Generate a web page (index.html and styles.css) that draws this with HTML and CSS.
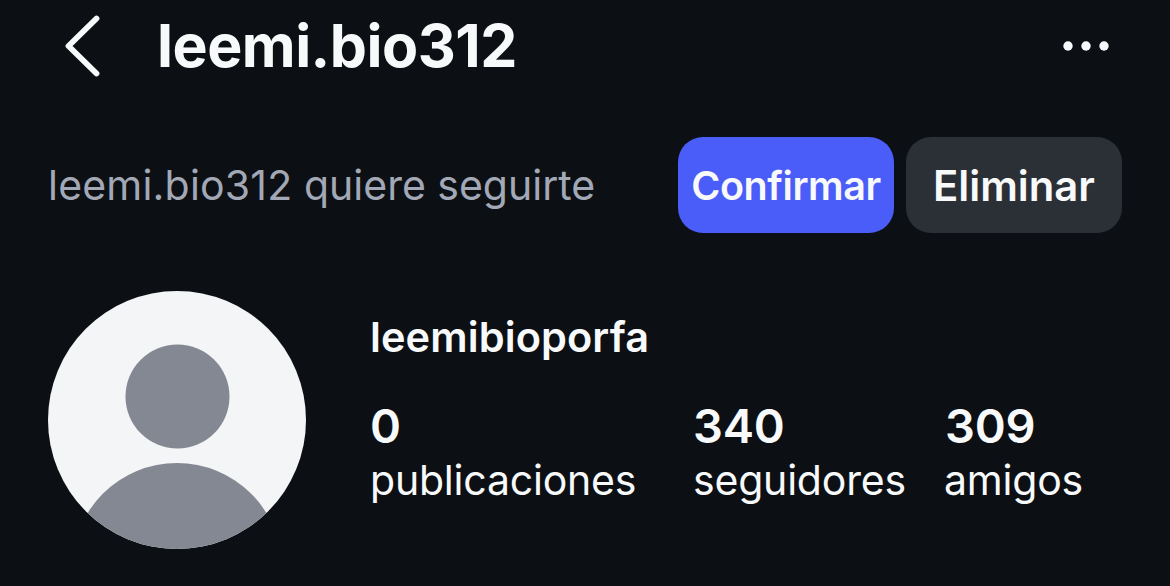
FILE: index.html
```html
<!DOCTYPE html>
<html lang="es">
<head>
  <meta charset="UTF-8" />
  <meta name="viewport" content="width=device-width, initial-scale=1.0" />
  <title>leemi.bio312</title>
  <link rel="stylesheet" href="styles.css">
</head>
<body>
  <header>
    <svg class="back" width="36" height="64" viewBox="0 0 36 64">
      <path d="M32.500 4.500 L4.500 32 L32.500 59.500" fill="none" stroke="#f8f9fa" stroke-width="5.800" stroke-linecap="round" stroke-linejoin="round" />
    </svg>
    <h1>leemi.bio312</h1>
    <svg class="more" width="48" height="12" viewBox="0 0 48 12">
      <circle cx="6" cy="6" r="4.700" />
      <circle cx="24" cy="6" r="4.700" />
      <circle cx="42" cy="6" r="4.700" />
    </svg>
  </header>

  <section class="request">
    <p><span class="user">leemi.bio312</span> quiere seguirte</p>
    <button class="confirm">Confirmar</button>
    <button class="delete">Eliminar</button>
  </section>

  <main>
    <svg class="avatar" width="258" height="258" viewBox="0 0 258 258">
      <defs>
        <clipPath id="round"><circle cx="129" cy="129" r="129" /></clipPath>
      </defs>
      <g clip-path="url(#round)">
        <rect width="258" height="258" fill="#f4f5f7" />
        <circle cx="129.500" cy="105.500" r="52" fill="#848893" />
        <circle cx="129" cy="277" r="105" fill="#848893" />
      </g>
    </svg>
    <div class="info">
      <h2>leemibioporfa</h2>
      <div class="stats">
        <div class="stat posts"><strong>0</strong><span>publicaciones</span></div>
        <div class="stat followers"><strong>340</strong><span>seguidores</span></div>
        <div class="stat friends"><strong>309</strong><span>amigos</span></div>
      </div>
    </div>
  </main>
</body>
</html>
```
FILE: styles.css
```css
* {
  box-sizing: border-box;
}

body {
  margin: 0;
  height: 586px;
  overflow: hidden;
  font-family: Inter, sans-serif;
  background-color: #0c1014;
  color: #f8f9fa;
}

h1, h2, p {
  margin: 0;
  white-space: nowrap;
}

header {
  display: flex;
  align-items: center;
  height: 92px;
  padding: 0 60px 0 64px;
}

h1 {
  margin-left: 57px;
  padding-bottom: 2px;
  font-size: 59px;
  font-weight: 700;
  letter-spacing: -0.5px;
}

.more {
  margin-left: auto;
  fill: #f8f9fa;
}

.request {
  display: flex;
  align-items: center;
  gap: 12px;
  height: 96px;
  margin: 45px 48px 0 48px;
}

.request p {
  flex: 1;
  font-size: 41px;
  color: #a2a8b5;
}

.user {
  letter-spacing: 0.2px;
}

button {
  width: 216px;
  height: 96px;
  padding: 2px 0 0;
  border: none;
  border-radius: 25px;
  font-family: inherit;
  font-weight: 600;
  color: #f8f9fa;
}

.confirm {
  background-color: #4a5df9;
  font-size: 39.5px;
  letter-spacing: -0.4px;
}

.delete {
  background-color: #2b3036;
  font-size: 41.8px;
}

main {
  display: flex;
  margin: 58px 0 0 48px;
}

.avatar {
  flex: none;
}

.info {
  margin-left: 64px;
  padding-top: 19px;
}

h2 {
  font-size: 41.5px;
  font-weight: 600;
  line-height: 54px;
  letter-spacing: 0.1px;
}

.stats {
  display: flex;
  margin-top: 35px;
}

.stat {
  display: flex;
  flex-direction: column;
  font-size: 41px;
  line-height: 54px;
  letter-spacing: -0.2px;
}

.stat strong {
  font-size: 47px;
  font-weight: 600;
}

.posts {
  width: 323px;
}

.followers {
  width: 251px;
}

.friends strong {
  padding-left: 1px;
}
```
